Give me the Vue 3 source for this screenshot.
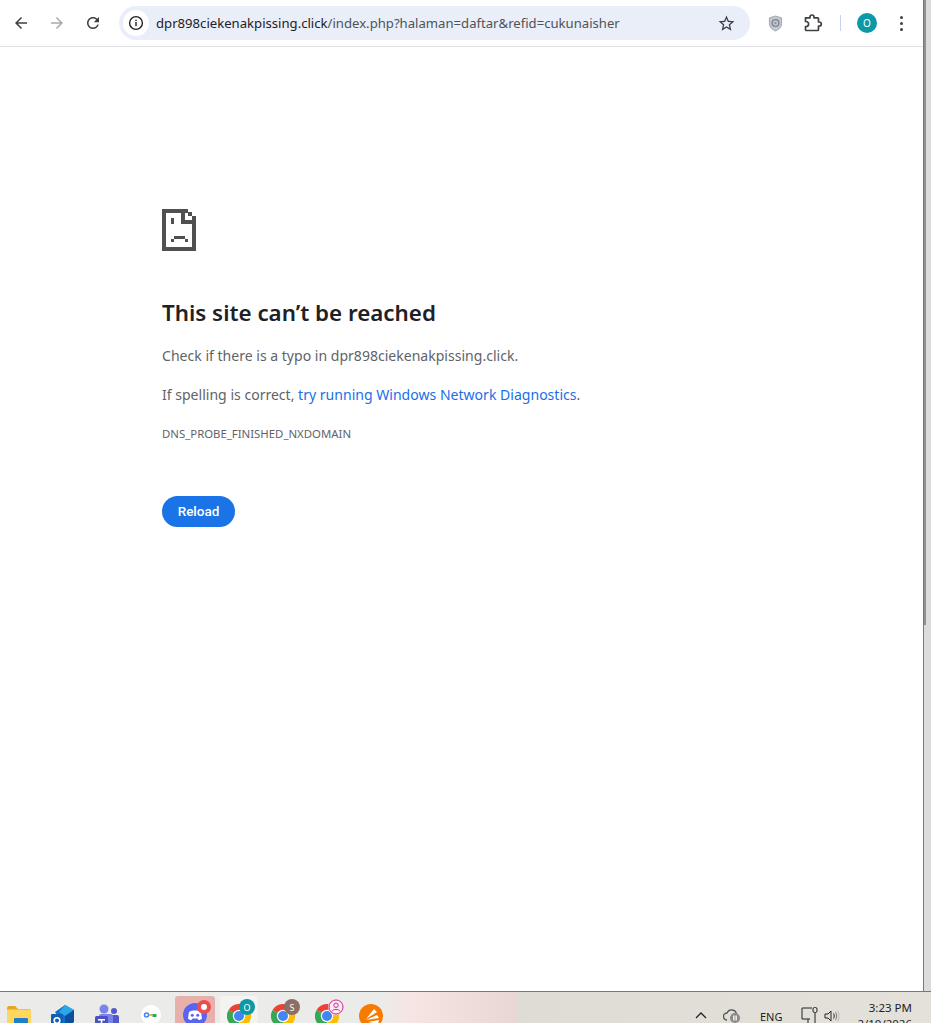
<script setup>
const pixels = [
  [0,0,4,42],[0,38,34,4],[0,0,26,4],[30,11,4,31],[26,3,4,4],[30,7,4,4],
  [19,0,4,15],[19,11,15,4],[9,9,3,6],[12,27,11,3],[9,30,3,3],[23,30,3,3]
]
</script>

<template>
  <div class="screen">
    <div class="desk">
      <div class="browser">
        <header class="toolbar">
          <div class="nav">
            <svg class="ic" viewBox="0 0 24 24" width="18" height="18"><path fill="#3c4043" d="M20 11H7.830l5.590-5.590L12 4l-8 8 8 8 1.410-1.410L7.830 13H20v-2z"/></svg>
            <svg class="ic" viewBox="0 0 24 24" width="18" height="18"><path fill="#a8abaf" d="M4 11h12.170l-5.590-5.590L12 4l8 8-8 8-1.410-1.410L16.170 13H4v-2z"/></svg>
            <svg class="ic" viewBox="0 0 24 24" width="18" height="18"><path fill="#3c4043" d="M17.650 6.350C16.200 4.900 14.210 4 12 4c-4.420 0-7.990 3.580-7.990 8s3.570 8 7.990 8c3.730 0 6.840-2.550 7.730-6h-2.080c-.82 2.330-3.040 4-5.650 4-3.310 0-6-2.690-6-6s2.690-6 6-6c1.660 0 3.140.69 4.220 1.780L13 11h7V4l-2.350 2.350z"/></svg>
          </div>
          <div class="omnibox">
            <span class="info">
              <svg viewBox="0 0 16 16" width="16" height="16"><circle cx="8" cy="8" r="6.400" fill="none" stroke="#202124" stroke-width="1.400"/><rect x="7.300" y="7" width="1.400" height="4.200" fill="#202124"/><rect x="7.300" y="4.700" width="1.400" height="1.400" fill="#202124"/></svg>
            </span>
            <span class="url"><span class="host">dpr898ciekenakpissing.click</span>/index.php?halaman=daftar&amp;refid=cukunaisher</span>
            <svg class="star" viewBox="0 0 24 24" width="19" height="19"><path fill="#3c4043" d="M22 9.240l-7.190-.62L12 2 9.190 8.630 2 9.240l5.460 4.730L5.820 21 12 17.270 18.180 21l-1.630-7.030L22 9.240zM12 15.400l-3.760 2.270 1-4.280-3.320-2.880 4.380-.38L12 6.100l1.710 4.040 4.380.38-3.320 2.880 1 4.280L12 15.400z"/></svg>
          </div>
          <div class="tools">
            <svg class="shield" viewBox="0 0 16 18" width="15" height="17"><path d="M8 1l6.500 2v6c0 4-3 6.600-6.500 8C4.500 15.600 1.500 13 1.500 9V3z" fill="#c3c7d0" stroke="#9ea3ae" stroke-width="1"/><circle cx="8" cy="8.500" r="3.600" fill="none" stroke="#7f8590" stroke-width="1.500"/><circle cx="8" cy="8.500" r="1.200" fill="#8b909b"/></svg>
            <svg class="puzzle" viewBox="0 0 20 20" width="20" height="20"><path fill="none" stroke="#3c4043" stroke-width="1.700" stroke-linejoin="round" d="M2.500 4.800H7V4a2 2 0 0 1 4 0v.8h3.500a1 1 0 0 1 1 1V9h.8a2 2 0 0 1 0 4h-.8v3.500a1 1 0 0 1-1 1h-11a1 1 0 0 1-1-1V13.500h.6a2.500 2.500 0 0 0 0-5H2.500z"/></svg>
            <span class="sep"></span>
            <span class="avatar">O</span>
            <span class="dots"><i></i><i></i><i></i></span>
          </div>
        </header>

        <main class="page">
          <svg class="sad" viewBox="0 0 34 42" width="34" height="42" shape-rendering="crispEdges">
            <rect v-for="(p, i) in pixels" :key="i" :x="p[0]" :y="p[1]" :width="p[2]" :height="p[3]" fill="#4f5052"/>
          </svg>
          <h1>This site can’t be reached</h1>
          <p class="first">Check if there is a typo in dpr898ciekenakpissing.click.</p>
          <p class="second">If spelling is correct, <a>try running Windows Network Diagnostics</a>.</p>
          <div class="code">DNS_PROBE_FINISHED_NXDOMAIN</div>
          <button class="reload">Reload</button>
        </main>
      </div>
      <div class="edge"></div>
    </div>

    <footer class="taskbar">
      <div class="apps">
        <svg class="app folder" viewBox="0 0 24 22" width="24" height="22"><path d="M0 3a2 2 0 0 1 2-2h6l3 3h11a2 2 0 0 1 2 2v16H0z" fill="#e9a61c"/><rect y="4.500" width="24" height="17.500" fill="#ffd75e"/><rect x="7" y="13" width="14" height="9" rx="1" fill="#1f7fc9"/></svg>
        <svg class="app outlook" viewBox="0 0 24 22" width="24" height="22"><path d="M4 7l10-7 9 5v12l-9 5z" fill="#1072c9"/><path d="M14 0l9 5-9 6-6-4z" fill="#2aa9e8"/><path d="M14 11l9-6v12l-9 5z" fill="#0d4f9c"/><rect x="0" y="9" width="12" height="13" rx="1" fill="#0f5fb5"/><circle cx="6" cy="15.500" r="2.800" fill="none" stroke="#fff" stroke-width="1.600"/></svg>
        <svg class="app teams" viewBox="0 0 24 24" width="24" height="24"><circle cx="9" cy="5" r="4.500" fill="#7b83eb"/><circle cx="19" cy="7" r="3" fill="#5059c9"/><rect x="15" y="11" width="9" height="13" rx="2" fill="#5059c9"/><rect x="4" y="10" width="14" height="14" rx="2" fill="#7b83eb"/><rect x="0" y="12" width="13" height="12" rx="1.500" fill="#4b53bc"/><path d="M3 15h7v1.600H7.300V23H5.700v-6.400H3z" fill="#fff"/></svg>
        <svg class="app keys" viewBox="0 0 20 20" width="20" height="20"><circle cx="10" cy="10" r="10" fill="#fff"/><circle cx="5.500" cy="10" r="2" fill="none" stroke="#4285f4" stroke-width="1.500"/><rect x="8" y="9" width="3.500" height="2" fill="#fbbc04"/><rect x="11.500" y="9" width="4" height="3" fill="#34a853"/></svg>
        <div class="tile discord">
          <svg viewBox="0 0 24 24" width="24" height="24"><circle cx="12" cy="12" r="12" fill="#5865f2"/><path d="M6 9c2-1.500 3.500-1.500 6-1.500S16 7.500 18 9l1 6.500c-1 1-2.500 1.500-3.500 1.500l-1-1.500h-5l-1 1.500c-1 0-2.500-.5-3.500-1.500z" fill="#fff"/><circle cx="9.300" cy="12.300" r="1.500" fill="#5865f2"/><circle cx="14.700" cy="12.300" r="1.500" fill="#5865f2"/></svg>
          <span class="redbadge"><i></i></span>
        </div>
        <div class="tile active">
          <svg class="chrome" viewBox="0 0 24 24" width="24" height="24"><use href="#chrome-logo"/></svg>
          <span class="badge teal">O</span>
        </div>
        <div class="tile">
          <svg class="chrome" viewBox="0 0 24 24" width="24" height="24"><use href="#chrome-logo"/></svg>
          <span class="badge brown">S</span>
        </div>
        <div class="tile">
          <svg class="chrome" viewBox="0 0 24 24" width="24" height="24"><use href="#chrome-logo"/></svg>
          <span class="badge pink">
            <svg viewBox="0 0 16 16" width="16" height="16"><circle cx="8" cy="8" r="7" fill="#fbe9f3" stroke="#c9308c"/><circle cx="8" cy="6.300" r="2.200" fill="none" stroke="#c9308c"/><path d="M4.200 12.200c1-2.400 6.600-2.400 7.600 0" fill="none" stroke="#c9308c"/></svg>
          </span>
        </div>
        <svg class="app sound" viewBox="0 0 24 24" width="24" height="24"><circle cx="12" cy="12" r="12" fill="#f57c00"/><path d="M7 15L15 5l3 3zM7 16l11-5 2 3zM9 18l11-2-1 4z" fill="#fff"/></svg>
        <svg class="defs" width="0" height="0"><defs><g id="chrome-logo"><path d="M12 12L1.600 6A12 12 0 0 1 22.400 6z" fill="#ea4335"/><path d="M12 12L22.400 6A12 12 0 0 1 12 24z" fill="#fbbc04"/><path d="M12 12L12 24A12 12 0 0 1 1.600 6z" fill="#34a853"/><circle cx="12" cy="12" r="6.200" fill="#fff"/><circle cx="12" cy="12" r="5" fill="#4285f4"/></g></defs></svg>
      </div>
      <div class="tray">
        <svg class="chev" viewBox="0 0 12 8" width="12" height="8"><path d="M1 7l5-5 5 5" fill="none" stroke="#222" stroke-width="1.300"/></svg>
        <svg class="cloud" viewBox="0 0 18 16" width="18" height="16"><path d="M4 13a3.500 3.500 0 0 1 0-7 5 5 0 0 1 9.500 1" fill="none" stroke="#555" stroke-width="1.300"/><circle cx="12" cy="11" r="5" fill="#8a8a8a"/><rect x="10.200" y="8.500" width="1.300" height="5" fill="#fff"/><rect x="12.500" y="8.500" width="1.300" height="5" fill="#fff"/></svg>
        <span class="eng">ENG</span>
        <svg class="net" viewBox="0 0 18 18" width="18" height="18"><path d="M11 1H1v11h8M7 12v5M4 17h7" fill="none" stroke="#222" stroke-width="1"/><rect x="12" y="0.500" width="4" height="5" rx="1.500" fill="none" stroke="#222"/><path d="M14 5.500v11" stroke="#222"/></svg>
        <svg class="vol" viewBox="0 0 16 14" width="16" height="14"><path d="M1 5h3l3-3v10L4 9H1z" fill="none" stroke="#222"/><path d="M9.500 4.500c1 1.500 1 3.500 0 5" fill="none" stroke="#222"/><path d="M11.500 3c1.500 2 1.500 6 0 8" fill="none" stroke="#777"/><path d="M13.500 1.500c2 3 2 8 0 11" fill="none" stroke="#bbb"/></svg>
        <div class="clock"><span>3:23 PM</span><span>2/10/2026</span></div>
      </div>
    </footer>
  </div>
</template>

<style>
html, body { margin: 0; overflow: hidden; background: #fff; }
</style>

<style scoped>
.screen {
  width: 931px;
  height: 1023px;
  display: flex;
  flex-direction: column;
  overflow: hidden;
  font-family: "Noto Sans", "Open Sans", sans-serif;
}
.desk { flex: 0 0 991px; display: flex; }
.browser { width: 924px; display: flex; flex-direction: column; background: #fff; }
.edge {
  width: 7px;
  border-left: 1px solid #77787a;
  background: linear-gradient(#909193, #909193) left top / 2px 625px no-repeat, #dcdcdc;
}
.toolbar {
  flex: 0 0 46px;
  display: flex;
  align-items: center;
  border-bottom: 1px solid #dfe1e5;
}
.nav { display: flex; align-items: center; gap: 18px; padding-left: 12px; width: 119px; box-sizing: border-box; }
.ic { display: block; }
.omnibox {
  width: 631px;
  height: 34px;
  background: #e9eef8;
  border-radius: 17px;
  display: flex;
  align-items: center;
  box-sizing: border-box;
  padding: 0 14px 0 4px;
}
.info {
  width: 26px;
  height: 26px;
  border-radius: 50%;
  background: #fff;
  display: flex;
  align-items: center;
  justify-content: center;
  margin-right: 7px;
}
.url {
  flex: 1;
  font-size: 13.130px;
  color: #4f5358;
  white-space: nowrap;
}
.host { color: #1f2124; }
.star { display: block; }
.tools { display: flex; align-items: center; padding-left: 18px; }
.shield { display: block; margin-right: 20px; }
.puzzle { display: block; margin-right: 17px; }
.sep { width: 1px; height: 16px; background: #c4d4ee; margin-right: 16px; }
.avatar {
  width: 20px;
  height: 20px;
  border-radius: 50%;
  background: #0b99a6;
  color: #fff;
  font-size: 10px;
  display: flex;
  align-items: center;
  justify-content: center;
  margin-right: 23px;
}
.dots { display: flex; flex-direction: column; gap: 3px; }
.dots i { width: 3px; height: 3px; border-radius: 50%; background: #3c4043; display: block; }

.page { flex: 1; padding: 162px 0 0 162px; display: flex; flex-direction: column; align-items: flex-start; }
.sad { display: block; }
h1 {
  margin: 46px 0 0;
  font-size: 22.350px;
  line-height: 32px;
  font-weight: 600;
  color: #202124;
}
p { margin: 0; font-size: 14.050px; line-height: 20px; color: #5f6368; }
.first { margin-top: 17px; }
.second { margin-top: 19px; }
a { color: #1a6fe8; }
.code { margin-top: 19px; font-size: 11.380px; line-height: 20px; color: #5f6368; }
.reload {
  margin-top: 52px;
  width: 73px;
  height: 31px;
  border: 0;
  border-radius: 16px;
  background: #1b73e8;
  color: #fff;
  font: 500 13.500px Roboto, sans-serif;
  padding: 0 0 2px;
}

.taskbar {
  flex: 0 0 32px;
  display: flex;
  justify-content: space-between;
  box-sizing: border-box;
  border-top: 1px solid #77787a;
  background: linear-gradient(90deg, #ebebe9 0%, #ebebe9 41%, #f6e5e3 44%, #e8d7d4 55.400%, #dfdcd4 55.800%, #e3e1da 100%);
  overflow: hidden;
}
.apps { display: flex; align-items: flex-start; padding: 4px 0 0 7px; }
.app { display: block; flex: none; }
.defs { position: absolute; }
.folder { margin-top: 9px; }
.outlook { margin: 9px 0 0 20px; }
.teams { margin: 8px 0 0 20px; }
.keys { margin: 9px 0 0 22px; }
.sound { margin: 8px 0 0 13px; }
.tile {
  position: relative;
  width: 38px;
  height: 40px;
  margin-left: 6px;
  box-sizing: border-box;
  padding: 8px 0 0 7px;
  flex: none;
}
.discord { background: #e8b0ab; width: 40px; margin-left: 14px; padding: 7px 0 0 8px; border-radius: 3px; }
.active { background: #f4f3f1; margin-left: 5px; border-radius: 3px; }
.chrome { display: block; }
.redbadge {
  position: absolute;
  top: 4px;
  left: 22px;
  width: 14px;
  height: 14px;
  border-radius: 50%;
  background: #ea4f4f;
  display: flex;
  align-items: center;
  justify-content: center;
}
.redbadge i { width: 6px; height: 6px; background: #fff; border-radius: 50%; display: block; }
.badge {
  position: absolute;
  top: 3px;
  left: 19px;
  width: 16px;
  height: 16px;
  border-radius: 50%;
  color: #fff;
  font-size: 9px;
  display: flex;
  align-items: center;
  justify-content: center;
}
.teal { background: #0b99a6; }
.brown { background: #8d6e63; left: 20px; }
.pink { background: #f7d7ea; left: 20px; }

.tray { display: flex; align-items: flex-start; position: relative; width: 241px; flex: none; }
.tray > * { position: absolute; }
.chev { left: 5px; top: 19px; }
.cloud { left: 33px; top: 15px; }
.eng { left: 70px; top: 17px; font-size: 11px; line-height: 15px; color: #222; }
.net { left: 111px; top: 15px; }
.vol { left: 134px; top: 17px; }
.clock {
  left: 165px;
  top: 8px;
  width: 57px;
  display: flex;
  flex-direction: column;
  align-items: flex-end;
  font-size: 11.500px;
  line-height: 16px;
  color: #222;
  white-space: nowrap;
}
</style>
